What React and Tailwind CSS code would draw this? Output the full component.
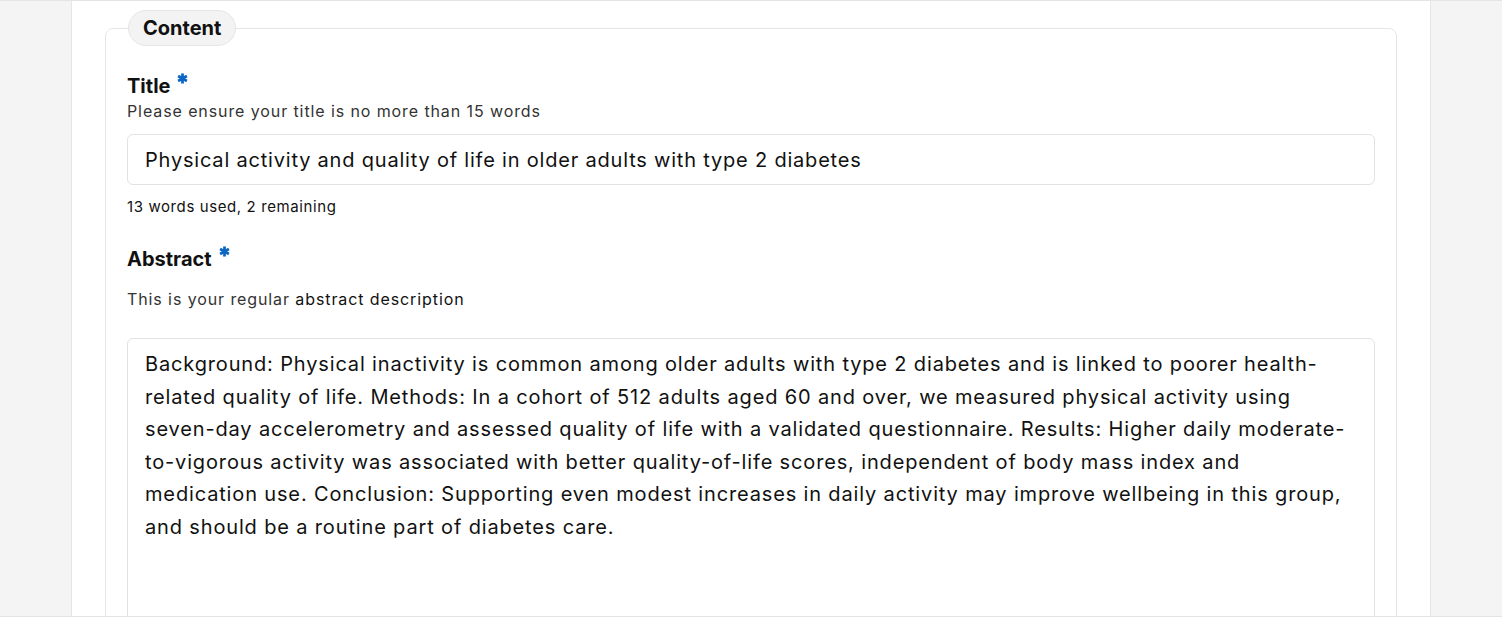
import { useState } from 'react';

const ABSTRACT =
  'Background: Physical inactivity is common among older adults with type 2 diabetes and is linked to poorer health-related quality of life. Methods: In a cohort of 512 adults aged 60 and over, we measured physical activity using seven-day accelerometry and assessed quality of life with a validated questionnaire. Results: Higher daily moderate-to-vigorous activity was associated with better quality-of-life scores, independent of body mass index and medication use. Conclusion: Supporting even modest increases in daily activity may improve wellbeing in this group, and should be a routine part of diabetes care.';

// required marker: heavy six-spoke asterisk
function Required() {
  return (
    <svg viewBox="0 0 12 12" className="ml-[7px] inline-block h-[11px] w-[11px] -translate-y-[9px] align-middle" aria-hidden="true">
      <g stroke="#0b66c3" strokeWidth="3" strokeLinecap="butt">
        <line x1="6" y1="0.5" x2="6" y2="11.5" />
        <line x1="1.2" y1="3.25" x2="10.8" y2="8.75" />
        <line x1="1.2" y1="8.75" x2="10.8" y2="3.25" />
      </g>
    </svg>
  );
}

export default function App() {
  const [title, setTitle] = useState('Physical activity and quality of life in older adults with type 2 diabetes');
  const [abstract, setAbstract] = useState(ABSTRACT);
  const used = title.trim() ? title.trim().split(/\s+/).length : 0;

  return (
    <div className="h-[617px] overflow-hidden border-y border-[#e4e4e6] bg-[#f4f4f5] font-['Inter',sans-serif] text-[#111]">
      <div className="mx-auto h-full w-[1360px] border-x border-[#e6e6e8] bg-white px-[33px] pt-[9px]">
        <fieldset className="rounded-[8px] border border-[#e6e6e8] px-[21px] pb-8">
          <legend className="ml-[1px] rounded-full border border-[#e6e6e8] bg-[#f3f3f4] px-[14px] text-[20px] font-bold leading-[34px]">
            Content
          </legend>

          <label htmlFor="title" className="mt-[27px] block text-[20px] font-bold leading-[26px]">
            Title<Required />
          </label>
          <p className="text-[16px] leading-[24px] tracking-[0.9px] text-[#333]">Please ensure your title is no more than 15 words</p>
          <input
            id="title"
            value={title}
            onChange={(e) => setTitle(e.target.value)}
            className="mt-[11px] block h-[51px] w-full rounded-[6px] border border-[#e2e2e4] px-[17px] text-[20px] tracking-[0.8px] outline-none"
          />
          <p className="mt-[11px] text-[15px] leading-[22px] tracking-[0.6px]">
            {used} words used, {15 - used} remaining
          </p>

          <label htmlFor="abstract" className="mt-[28px] block text-[20px] font-bold leading-[26px]">
            Abstract<Required />
          </label>
          <p className="mt-[15px] text-[16px] leading-[24px] tracking-[0.9px] text-[#333]">
            This is your regular <span className="text-[#111]">abstract description</span>
          </p>
          <textarea
            id="abstract"
            value={abstract}
            onChange={(e) => setAbstract(e.target.value)}
            className="mt-[27px] block h-[340px] w-full resize-none rounded-[6px] border border-[#e2e2e4] pl-[17px] pr-[22px] pt-[9px] text-[20px] leading-[32.6px] tracking-[0.85px] outline-none"
          />
        </fieldset>
      </div>
    </div>
  );
}
